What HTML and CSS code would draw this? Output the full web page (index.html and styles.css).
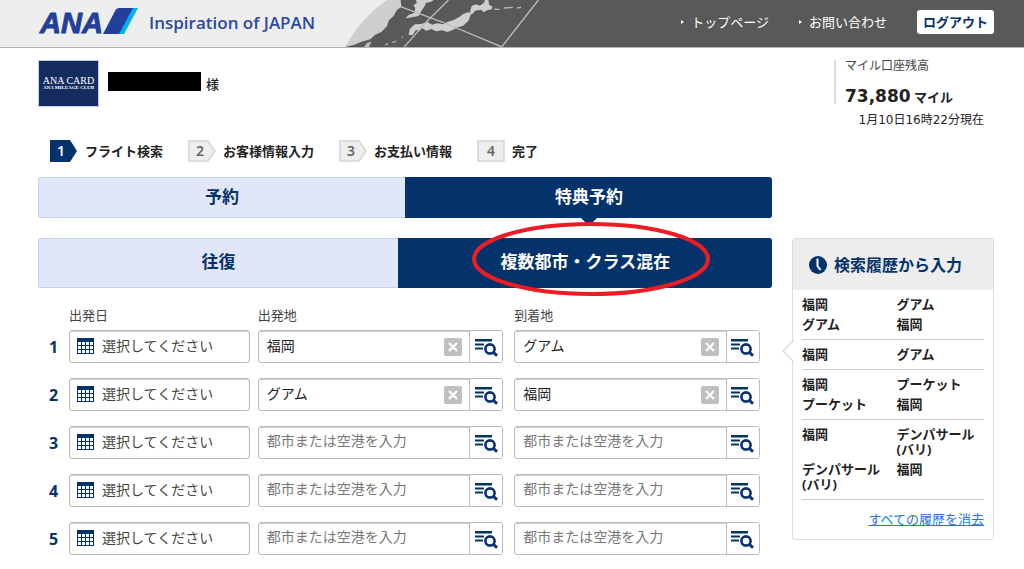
FILE: index.html
```html
<!DOCTYPE html>
<html lang="ja">
<head>
<meta charset="utf-8">
<meta name="viewport" content="width=device-width, initial-scale=1">
<title>ANA 特典予約</title>
<link rel="stylesheet" href="styles.css">
</head>
<body>
<svg class="sprite" aria-hidden="true">
  <symbol id="i-cal" viewBox="0 0 17 16">
    <path fill="#04326a" d="M0 0h17v16H0z"/>
    <path fill="#fff" d="M1 4h3v3H1zM5 4h3v3H5zM9 4h3v3H9zM13 4h3v3h-3zM1 8h3v3H1zM5 8h3v3H5zM9 8h3v3H9zM13 8h3v3h-3zM1 12h3v3H1zM5 12h3v3H5zM9 12h3v3H9zM13 12h3v3h-3z"/>
  </symbol>
  <symbol id="i-list" viewBox="0 0 23 18">
    <path fill="#04326a" d="M0 0h17v2.500H0zM0 4.500h9v2H0zM0 8.500h8v2H0z"/>
    <circle cx="15" cy="10" r="4.6" fill="none" stroke="#04326a" stroke-width="2.6"/>
    <path d="M18.4 13.2l3.600 3.600" stroke="#04326a" stroke-width="3" fill="none"/>
  </symbol>
  <symbol id="i-x" viewBox="0 0 18 18">
    <rect width="18" height="18" rx="2" fill="#bfbfbf"/>
    <path d="M5 5l8 8M13 5l-8 8" stroke="#fff" stroke-width="2.2" fill="none"/>
  </symbol>
</svg>

<header class="header">
  <a class="brand" href="#" aria-label="ANA">
    <svg class="logo" viewBox="0 0 101 28" aria-hidden="true">
      <text class="logo-text" x="2" y="25">ANA</text>
      <path fill="#00b0f0" d="M94 0h6L86 26h-6z"/>
      <path fill="#223f9a" d="M81 0h14L81 26H65L77 3q1.500-3 4-3z"/>
    </svg>
    <span class="tagline">Inspiration of JAPAN</span>
  </a>
  <svg class="globe" viewBox="0 0 640 141" aria-hidden="true">
    <path fill="#eee" d="M0 0h190Q90 65 48 141H0z"/>
    <path fill="#cfcfcf" d="M170 0h42l3 20-14 10-10 18-14 13-6 18-16 16-20 10-14 13-26 7-22 9-28 7Q92 55 170 0z"/>
    <path fill="#cfcfcf" d="M258 0h54l-8 5-15 3-6 12-9 14-8 14-20 4-19 3 9-10 18-7 2-13-5-9 10-8z"/>
    <path fill="#cfcfcf" d="M426 17l14-4 10 4 12-8 4-9h10l2 14 10 6-2 8-14 3-10 6-8-8-18 3-6 8-10 6 2-16z"/>
    <path fill="#cfcfcf" d="M418 36l4 10-6 16-16 15-19 6-14 8-14 5-16-5-18 3-14-7-16 5-13-8-6 8-12-2-10 16-12-2 4-18 15-13 18-1 20-6 14 8 15-4 18 3 14-8 18-5 16-9 14-10z"/>
    <path fill="#bbb" d="M102 141l9-12 14-5-8 17zM522 22l26-2 2 4-28 2zM562 22l12-2v4l-12 2zM494 25l16 2v3l-16-1zM166 132l10-2-3 4-8 2zM186 126l16-5-5 5-10 3zM214 112l7-3-3 5z"/>
    <path fill="none" stroke="#bdbdbd" stroke-width="4" d="M356 0L290 65 223 141M626 0L516 141M212 20l125 46 179 75"/>
  </svg>
  <nav class="nav">
    <a class="nav-link" href="#">トップページ</a>
    <a class="nav-link" href="#">お問い合わせ</a>
    <button class="logout" type="button">ログアウト</button>
  </nav>
</header>

<div class="member">
  <div class="card"><span class="card-name">ANA CARD</span><span class="card-club">ANA MILEAGE CLUB</span></div>
  <span class="masked"></span>
  <span class="honorific">様</span>
  <div class="miles">
    <div class="miles-box">
      <div class="miles-label">マイル口座残高</div>
      <div class="miles-value"><strong class="miles-num">73,880</strong> マイル</div>
    </div>
    <div class="miles-date">1月10日16時22分現在</div>
  </div>
</div>

<div class="page">
  <main class="main">
    <ol class="steps">
      <li class="step"><svg class="step-icon" viewBox="0 0 28 22" aria-hidden="true"><path fill="#04326a" d="M0 0h20l7 11-7 11H0z"/><text class="step-num step-num-on" x="11" y="16">1</text></svg>フライト検索</li>
      <li class="step"><svg class="step-icon" viewBox="0 0 28 22" aria-hidden="true"><path class="step-shape" d="M1 1h19l7 10-7 10H1z"/><text class="step-num" x="12" y="16">2</text></svg>お客様情報入力</li>
      <li class="step"><svg class="step-icon" viewBox="0 0 28 22" aria-hidden="true"><path class="step-shape" d="M1 1h19l7 10-7 10H1z"/><text class="step-num" x="12" y="16">3</text></svg>お支払い情報</li>
      <li class="step"><svg class="step-icon" viewBox="0 0 28 22" aria-hidden="true"><path class="step-shape" d="M1 1h26v20H1z"/><text class="step-num" x="14" y="16">4</text></svg>完了</li>
    </ol>

    <div class="tabs tabs-kind">
      <button class="tab" type="button">予約</button>
      <button class="tab tab-on tab-pointer" type="button">特典予約</button>
    </div>
    <div class="tabs tabs-trip">
      <button class="tab" type="button">往復</button>
      <button class="tab tab-on tab-wide" type="button">複数都市・クラス混在
        <svg class="ring" viewBox="0 0 240 76" aria-hidden="true"><ellipse cx="120" cy="38" rx="117" ry="35" fill="none" stroke="#ec1c24" stroke-width="4"/></svg>
      </button>
    </div>

    <form class="legs">
      <div class="leg leg-head">
        <span class="leg-num"></span>
        <label for="date1">出発日</label>
        <label class="leg-from" for="from1">出発地</label>
        <label class="leg-to" for="to1">到着地</label>
      </div>
      <div class="leg">
        <span class="leg-num">1</span>
        <button class="date" id="date1" type="button"><svg class="cal"><use href="#i-cal"/></svg>選択してください</button>
        <div class="leg-from place"><input class="place-input" id="from1" type="text" value="福岡" placeholder="都市または空港を入力"><button class="clear" type="button" aria-label="消去"><svg class="x"><use href="#i-x"/></svg></button><button class="pick" type="button" aria-label="一覧から検索"><svg class="list"><use href="#i-list"/></svg></button></div>
        <div class="leg-to place"><input class="place-input" id="to1" type="text" value="グアム" placeholder="都市または空港を入力"><button class="clear" type="button" aria-label="消去"><svg class="x"><use href="#i-x"/></svg></button><button class="pick" type="button" aria-label="一覧から検索"><svg class="list"><use href="#i-list"/></svg></button></div>
      </div>
      <div class="leg">
        <span class="leg-num">2</span>
        <button class="date" type="button"><svg class="cal"><use href="#i-cal"/></svg>選択してください</button>
        <div class="leg-from place"><input class="place-input" aria-label="出発地 2" type="text" value="グアム" placeholder="都市または空港を入力"><button class="clear" type="button" aria-label="消去"><svg class="x"><use href="#i-x"/></svg></button><button class="pick" type="button" aria-label="一覧から検索"><svg class="list"><use href="#i-list"/></svg></button></div>
        <div class="leg-to place"><input class="place-input" aria-label="到着地 2" type="text" value="福岡" placeholder="都市または空港を入力"><button class="clear" type="button" aria-label="消去"><svg class="x"><use href="#i-x"/></svg></button><button class="pick" type="button" aria-label="一覧から検索"><svg class="list"><use href="#i-list"/></svg></button></div>
      </div>
      <div class="leg">
        <span class="leg-num">3</span>
        <button class="date" type="button"><svg class="cal"><use href="#i-cal"/></svg>選択してください</button>
        <div class="leg-from place"><input class="place-input" aria-label="出発地 3" type="text" placeholder="都市または空港を入力"><button class="pick" type="button" aria-label="一覧から検索"><svg class="list"><use href="#i-list"/></svg></button></div>
        <div class="leg-to place"><input class="place-input" aria-label="到着地 3" type="text" placeholder="都市または空港を入力"><button class="pick" type="button" aria-label="一覧から検索"><svg class="list"><use href="#i-list"/></svg></button></div>
      </div>
      <div class="leg">
        <span class="leg-num">4</span>
        <button class="date" type="button"><svg class="cal"><use href="#i-cal"/></svg>選択してください</button>
        <div class="leg-from place"><input class="place-input" aria-label="出発地 4" type="text" placeholder="都市または空港を入力"><button class="pick" type="button" aria-label="一覧から検索"><svg class="list"><use href="#i-list"/></svg></button></div>
        <div class="leg-to place"><input class="place-input" aria-label="到着地 4" type="text" placeholder="都市または空港を入力"><button class="pick" type="button" aria-label="一覧から検索"><svg class="list"><use href="#i-list"/></svg></button></div>
      </div>
      <div class="leg">
        <span class="leg-num">5</span>
        <button class="date" type="button"><svg class="cal"><use href="#i-cal"/></svg>選択してください</button>
        <div class="leg-from place"><input class="place-input" aria-label="出発地 5" type="text" placeholder="都市または空港を入力"><button class="pick" type="button" aria-label="一覧から検索"><svg class="list"><use href="#i-list"/></svg></button></div>
        <div class="leg-to place"><input class="place-input" aria-label="到着地 5" type="text" placeholder="都市または空港を入力"><button class="pick" type="button" aria-label="一覧から検索"><svg class="list"><use href="#i-list"/></svg></button></div>
      </div>
    </form>
  </main>

  <aside class="history">
    <svg class="history-arrow" viewBox="0 0 12 22" aria-hidden="true"><path d="M12 0L1 11l11 11" fill="#fff" stroke="#ddd" stroke-width="1.500"/></svg>
    <h2 class="history-title"><svg class="clock" viewBox="0 0 18 18" aria-hidden="true"><circle cx="9" cy="9" r="9" fill="#04326a"/><path d="M8.500 2.500V10l3 4" fill="none" stroke="#fff" stroke-width="2"/></svg>検索履歴から入力</h2>
    <ul class="history-list">
      <li class="trip"><span>福岡</span><span>グアム</span><span>グアム</span><span>福岡</span></li>
      <li class="trip"><span>福岡</span><span>グアム</span></li>
      <li class="trip"><span>福岡</span><span>プーケット</span><span>プーケット</span><span>福岡</span></li>
      <li class="trip"><span>福岡</span><span>デンパサール<br>(バリ)</span><span>デンパサール<br>(バリ)</span><span>福岡</span></li>
    </ul>
    <a class="history-clear" href="#">すべての履歴を消去</a>
  </aside>
</div>
</body>
</html>
```

FILE: styles.css
```css
*, *::before, *::after { box-sizing: border-box; }

body {
  margin: 0;
  background: #fff;
  color: #222;
  font: 13px/20px "Noto Sans", "Noto Sans CJK JP", sans-serif;
}

button, input { font: inherit; color: inherit; margin: 0; }
button { cursor: pointer; }
svg { display: block; flex: none; }
.sprite { position: absolute; width: 0; height: 0; }

/* Header */
.header {
  display: flex;
  align-items: stretch;
  height: 48px;
  background: #595959;
  border-bottom: 1px solid #b5b5b5;
}
.brand {
  display: flex;
  align-items: center;
  gap: 10px;
  width: 330px;
  padding: 0 0 4px 38px;
  background: #eee;
  color: #2b4aa0;
  text-decoration: none;
}
.logo { width: 101px; height: 28px; overflow: visible; }
.logo-text { font: italic bold 29px "Liberation Sans", sans-serif; fill: #223f9a; stroke: #223f9a; }
.tagline { font: 600 17px/24px "Open Sans", sans-serif; white-space: nowrap; padding-top: 2px; }
.globe { width: 213px; height: 47px; }
.nav {
  display: flex;
  flex: 1;
  align-items: center;
  justify-content: flex-end;
  gap: 30px;
  padding: 0 30px 3px 0;
}
.nav-link {
  display: flex;
  align-items: center;
  gap: 7px;
  color: #fff;
  text-decoration: none;
  white-space: nowrap;
}
.nav-link::before {
  content: "";
  border: 2px solid transparent;
  border-left: 3px solid #fff;
  border-right: 0;
}
.logout {
  height: 24px;
  padding: 0 6px;
  border: 0;
  border-radius: 3px;
  background: #fff;
  color: #04326a;
  font-weight: bold;
  white-space: nowrap;
}

/* Member summary */
.member {
  display: flex;
  align-items: flex-start;
  padding: 12px 30px 0 38px;
}
.card {
  display: flex;
  flex-direction: column;
  align-items: center;
  justify-content: center;
  width: 61px;
  height: 47px;
  border: 1px solid #c3cde6;
  background: #142c5f;
  color: #fff;
  font-family: "Liberation Serif", serif;
  white-space: nowrap;
}
.card-name { font-size: 10px; line-height: 8px; }
.card-club { font-size: 5px; line-height: 6px; font-weight: bold; }
.masked { width: 93px; height: 19px; margin: 12px 5px 0 9px; background: #000; }
.honorific { margin-top: 14px; font-weight: 500; }
.miles { width: 160px; margin-left: auto; }
.miles-box { height: 44px; padding-left: 9px; border-left: 2px solid #ddd; }
.miles-label { font-size: 12px; line-height: 12px; color: #444; }
.miles-value { margin-top: 12px; font-weight: bold; line-height: 24px; white-space: nowrap; }
.miles-num { font-family: "DejaVu Sans", sans-serif; font-size: 17px; }
.miles-date {
  margin-top: 6px;
  padding-right: 10px;
  font-family: "DejaVu Sans", "Noto Sans CJK JP", sans-serif;
  font-size: 12px;
  text-align: right;
  white-space: nowrap;
}

/* Columns */
.page {
  display: grid;
  grid-template-columns: minmax(0, 1fr) 202px;
  gap: 20px;
  align-items: start;
  padding: 10px 30px 0 38px;
}

/* Progress steps */
.steps { display: flex; gap: 25px; margin: 0; padding: 0 0 0 12px; list-style: none; font-weight: bold; }
.step { display: flex; align-items: center; gap: 7px; white-space: nowrap; }
.step-icon { width: 28px; height: 22px; }
.step-shape { fill: #eee; stroke: #d5d5d5; stroke-width: 1.500; }
.step-num { font: 600 14px "Noto Sans", sans-serif; text-anchor: middle; fill: #666; }
.step-num-on { fill: #fff; }

/* Tabs */
.tabs { display: flex; border-radius: 3px; }
.tabs-kind { height: 41px; margin-top: 15px; }
.tabs-trip { height: 50px; margin-top: 20px; }
.tab {
  flex: 1 1 0;
  padding: 0 0 2px;
  border: 1px solid #c8d2ec;
  border-right: 0;
  border-radius: 3px 0 0 3px;
  background: #e1e7f8;
  color: #04326a;
  font-size: 17px;
  font-weight: bold;
}
.tab-on {
  position: relative;
  border-color: #04326a;
  border-radius: 0 3px 3px 0;
  background: #04326a;
  color: #fff;
}
.tab-wide { flex-grow: 1.04; }
.tab-pointer::after {
  content: "";
  position: absolute;
  top: 100%;
  left: calc(50% - 9px);
  border: 9px solid transparent;
  border-top-color: #04326a;
  border-bottom: 0;
}
.ring {
  position: absolute;
  top: -18px;
  left: calc(50% - 114px);
  width: 240px;
  height: 76px;
  pointer-events: none;
}

/* Flight legs */
.legs { display: flex; flex-direction: column; gap: 15px; padding: 17px 12px 0 0; }
.leg {
  display: grid;
  grid-template-columns: 31px minmax(0, 181fr) minmax(0, 254fr) minmax(0, 257fr);
  align-items: center;
  height: 33px;
}
.leg-head { height: 20px; margin-bottom: -10px; color: #444; }
.leg-num { padding: 0 8px; text-align: center; color: #04326a; font-size: 16px; font-weight: bold; }
.leg-from { margin-left: 8px; }
.leg-to { margin-left: 11px; }
.date, .place {
  display: flex;
  align-items: center;
  height: 33px;
  border: 1px solid #bbb;
  border-radius: 3px;
  background: #fff;
  box-shadow: inset 0 1px 1px #ccc;
  font-size: 14px;
}
.date { gap: 8px; padding: 0 7px 1px; color: #444; white-space: nowrap; }
.cal { width: 17px; height: 16px; }
.place-input {
  flex: 1;
  min-width: 0;
  height: 29px;
  padding: 0 0 4px 8px;
  border: 0;
  outline: 0;
  background: transparent;
}
.place-input::placeholder { color: #777; opacity: 1; }
.clear { padding: 0; margin-right: 7px; border: 0; background: none; }
.x { width: 18px; height: 18px; }
.pick {
  display: flex;
  align-items: center;
  justify-content: center;
  width: 33px;
  height: 31px;
  padding: 2px 0 0;
  border: 0;
  border-left: 1px solid #bbb;
  border-radius: 0 2px 2px 0;
  background: #fff;
}
.list { width: 23px; height: 18px; }

/* Search history */
.history {
  position: relative;
  margin-top: 98px;
  padding-bottom: 10px;
  border: 1px solid #ddd;
  border-radius: 3px;
}
.history-arrow { position: absolute; top: 101px; left: -11px; width: 12px; height: 22px; }
.history-title {
  display: flex;
  align-items: center;
  gap: 7px;
  height: 51px;
  margin: 0;
  padding-left: 16px;
  background: #ededed;
  color: #04326a;
  font-size: 16px;
  white-space: nowrap;
}
.clock { width: 18px; height: 18px; }
.history-list { margin: 0; padding: 0 9px; list-style: none; font-weight: bold; }
.trip {
  display: grid;
  grid-template-columns: 95fr 88fr;
  row-gap: 5px;
  padding: 7px 0;
  border-bottom: 1px solid #ccc;
  line-height: 15px;
  white-space: nowrap;
}
.history-clear { display: block; margin-top: 9px; padding-right: 9px; color: #2a74dc; text-align: right; }
```
